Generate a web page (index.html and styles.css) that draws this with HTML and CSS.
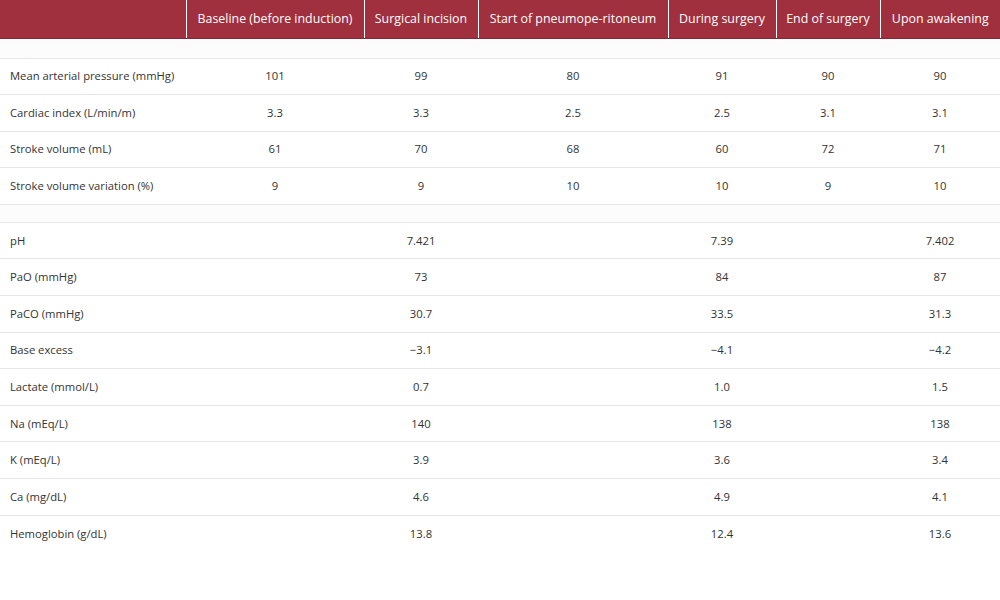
FILE: index.html
```html
<!DOCTYPE html>
<html>
<head>
<meta charset="utf-8">
<link rel="stylesheet" href="styles.css">
</head>
<body>
<table class="data">
<colgroup>
<col class="c1"><col class="c2"><col class="c3"><col class="c4"><col class="c5"><col class="c6"><col class="c7">
</colgroup>
<thead>
<tr><th></th><th>Baseline (before induction)</th><th>Surgical incision</th><th>Start of pneumope-ritoneum</th><th>During surgery</th><th>End of surgery</th><th>Upon awakening</th></tr>
</thead>
<tbody>
<tr class="gap first-gap"><td colspan="7"></td></tr>
<tr><td>Mean arterial pressure (mmHg)</td><td>101</td><td>99</td><td>80</td><td>91</td><td>90</td><td>90</td></tr>
<tr><td>Cardiac index (L/min/m)</td><td>3.3</td><td>3.3</td><td>2.5</td><td>2.5</td><td>3.1</td><td>3.1</td></tr>
<tr><td>Stroke volume (mL)</td><td>61</td><td>70</td><td>68</td><td>60</td><td>72</td><td>71</td></tr>
<tr><td>Stroke volume variation (%)</td><td>9</td><td>9</td><td>10</td><td>10</td><td>9</td><td>10</td></tr>
<tr class="gap"><td colspan="7"></td></tr>
<tr><td>pH</td><td></td><td>7.421</td><td></td><td>7.39</td><td></td><td>7.402</td></tr>
<tr><td>PaO (mmHg)</td><td></td><td>73</td><td></td><td>84</td><td></td><td>87</td></tr>
<tr><td>PaCO (mmHg)</td><td></td><td>30.7</td><td></td><td>33.5</td><td></td><td>31.3</td></tr>
<tr><td>Base excess</td><td></td><td>−3.1</td><td></td><td>−4.1</td><td></td><td>−4.2</td></tr>
<tr><td>Lactate (mmol/L)</td><td></td><td>0.7</td><td></td><td>1.0</td><td></td><td>1.5</td></tr>
<tr><td>Na (mEq/L)</td><td></td><td>140</td><td></td><td>138</td><td></td><td>138</td></tr>
<tr><td>K (mEq/L)</td><td></td><td>3.9</td><td></td><td>3.6</td><td></td><td>3.4</td></tr>
<tr><td>Ca (mg/dL)</td><td></td><td>4.6</td><td></td><td>4.9</td><td></td><td>4.1</td></tr>
<tr class="last"><td>Hemoglobin (g/dL)</td><td></td><td>13.8</td><td></td><td>12.4</td><td></td><td>13.6</td></tr>
</tbody>
</table>
</body>
</html>
```
FILE: styles.css
```css
html, body {
  margin: 0;
  padding: 0;
  background: #fff;
}
.data {
  width: 1000px;
  table-layout: fixed;
  border-collapse: collapse;
  font-family: "Open Sans", "Liberation Sans", sans-serif;
  font-size: 12.4px;
  color: #333;
}
.c1 { width: 186px; }
.c2 { width: 178px; }
.c3 { width: 114px; }
.c4 { width: 190px; }
.c5 { width: 108px; }
.c6 { width: 104px; }
.c7 { width: 120px; }
.data th {
  background: #a0303d;
  color: #fff;
  font-weight: normal;
  height: 38px;
  padding: 0 2px;
  box-sizing: border-box;
  border-left: 1px solid #fff;
  border-bottom: 1px solid #8a2633;
  text-align: center;
  white-space: nowrap;
}
.data th:first-child { border-left: none; }
.data td {
  height: 36.6px;
  padding: 0 4px;
  box-sizing: border-box;
  text-align: center;
  border-bottom: 1px solid #e6e6e6;
  font-size: 11.25px;
  line-height: 16px;
  white-space: nowrap;
}
.data td:first-child {
  text-align: left;
  padding-left: 10px;
  padding-right: 0;
}
.data tr.gap td {
  height: 18px;
  background: #fcfcfc;
}
.data tr.first-gap td { height: 20px; }
.data tr.last td { border-bottom: none; }
```
